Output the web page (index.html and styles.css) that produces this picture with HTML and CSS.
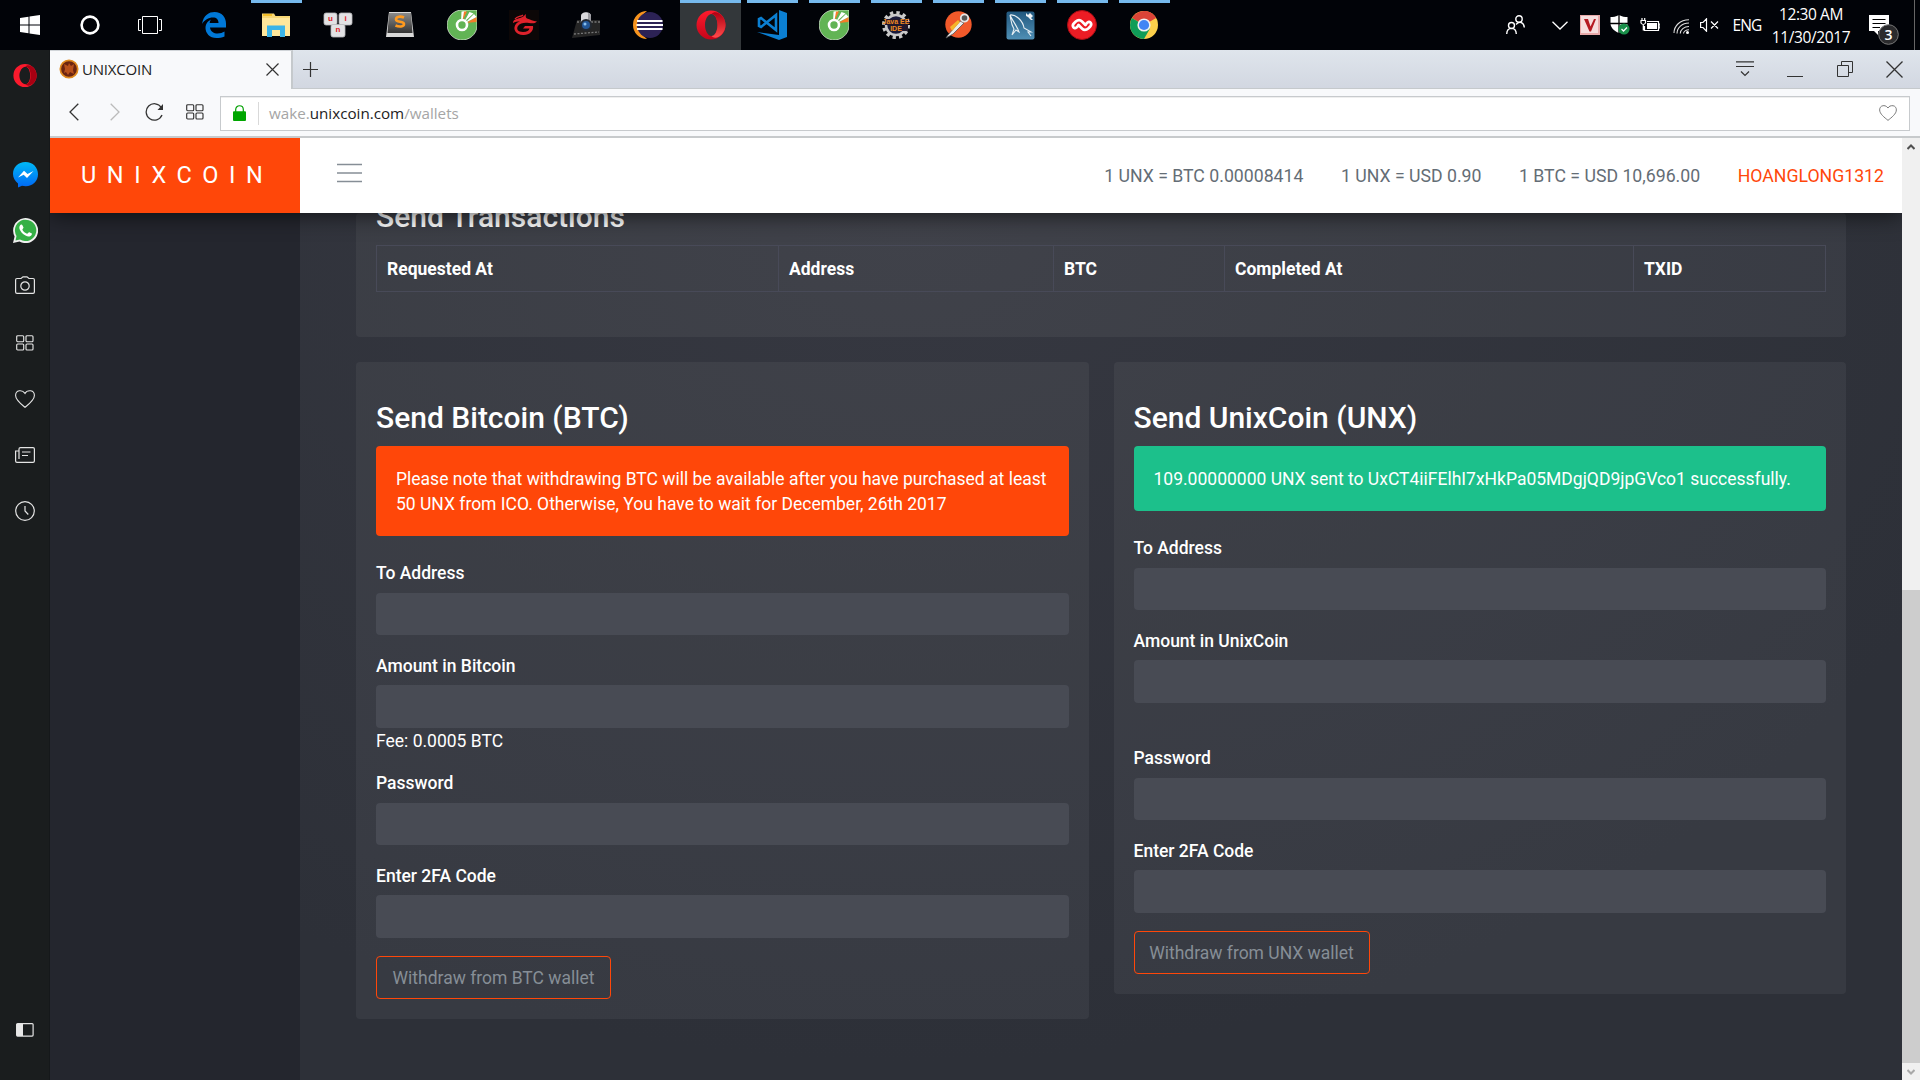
FILE: index.html
```html
<!DOCTYPE html>
<html lang="en">
<head>
<meta charset="utf-8">
<title>UNIXCOIN</title>
<link rel="stylesheet" href="styles.css">
</head>
<body>
<svg class="defs" width="0" height="0">
  <defs>
    <linearGradient id="redRing" x1="0" x2="0" y1="0" y2="1"><stop offset="0" stop-color="#ff1b2d"/><stop offset="1" stop-color="#c4051a"/></linearGradient>
    <linearGradient id="redRight" x1="0" x2="0" y1="0" y2="1"><stop offset="0" stop-color="#b00012"/><stop offset="1" stop-color="#ff4b4b"/></linearGradient>
    <linearGradient id="msg" x1="0" x2="0" y1="0" y2="1"><stop offset="0" stop-color="#00b8f5"/><stop offset="1" stop-color="#0067f5"/></linearGradient>
    <linearGradient id="keycap" x1="0" x2="0" y1="0" y2="1"><stop offset="0" stop-color="#8a8a8a"/><stop offset="1" stop-color="#343434"/></linearGradient>
    <linearGradient id="sea" x1="0" x2="0" y1="0" y2="1"><stop offset="0" stop-color="#21587f"/><stop offset="1" stop-color="#4f8fb5"/></linearGradient>
    <symbol id="coccoc" viewBox="0 0 30 30"><path d="M15 0H30V13A15 15 0 1 1 15 0Z" fill="#62b455" stroke="#e8f2e4" stroke-width=".7"/><path d="M14 13L14.500 1.500L19 1Z" fill="#fff"/><path d="M15.500 11L17 1.500L20 1.500Z" fill="#f57c28"/><path d="M17 12L22.500 2L26.500 3.500Z" fill="#fff"/><path d="M19 13L29.500 7V12Z" fill="#f57c28"/><path d="M18 13L27 4L29.500 7Z" fill="#fff"/><circle cx="15" cy="15" r="5" fill="#62b455" stroke="#fff" stroke-width="2.600"/></symbol>
    <symbol id="speed" viewBox="0 0 18 16"><g fill="none" stroke="currentColor" stroke-width="1.150"><rect x=".7" y=".7" width="7" height="6" rx="1"/><rect x="10" y=".7" width="7" height="6" rx="1"/><rect x=".7" y="9" width="7" height="6" rx="1"/><rect x="10" y="9" width="7" height="6" rx="1"/></g></symbol>
    <symbol id="heart" viewBox="0 0 20 18"><path d="M10 3.400C8 .6 5.500.6 4.300.8C1.500 1.300.6 3.500.6 5.500C.6 10 6 14 10 17.300C14 14 19.400 10 19.400 5.500C19.400 3.500 18.500 1.300 15.700.8C13 .5 11 1.500 10 3.400Z" fill="none" stroke="currentColor" stroke-width="1.100"/></symbol>
  </defs>
</svg>

<div class="taskbar">
  <div class="task task-sys"><svg width="20" height="20" viewBox="0 0 20 20"><path d="M0 3L8.500 1.700V9.500H0ZM9.500 1.500L20 0V9.500H9.500ZM0 10.500H8.500V18.300L0 17ZM9.500 10.500H20V20L9.500 18.500Z" fill="#fff"/></svg></div>
  <div class="task task-sys"><svg width="20" height="20" viewBox="0 0 20 20"><circle cx="10" cy="10" r="8.400" fill="none" stroke="#fff" stroke-width="2.600"/></svg></div>
  <div class="task task-view"><svg width="24" height="18" viewBox="0 0 24 18"><path d="M4.500.5H19.500V17.500H4.500ZM3 3.500H.5V14.500H3M21 3.500H23.500V14.500H21" fill="none" stroke="#fff"/></svg></div>
  <div class="task"><svg width="24" height="26" viewBox="0 0 24 26"><path d="M0 12C1.500 3 7 0 12.500 0C20 0 24 5.500 24 11.500V15.500H8C8.500 19.500 12 21.500 15.500 21.500C18.500 21.500 20.500 20.700 22.500 19.500V24.500C20 25.800 17 26 14.500 26C7.500 26 3.500 21 3.500 16C3.500 12 5.800 9 9 7.500C8 8.800 7.800 10 7.700 11H16.500C16.500 7.500 14.500 5.500 11 5.500C6.500 5.500 2.500 8 0 12Z" fill="#0078d7"/></svg></div>
  <div class="task open"><svg width="28" height="24" viewBox="0 0 28 24"><path d="M0 .5H12L13.500 3H28V23H0Z" fill="#f8d775"/><path d="M0 5H28V23H0Z" fill="#ffe79b"/><path d="M1 1H10V3H1Z" fill="#f3be2b"/><path d="M5 24V12.500H23V24H18V17H10V24Z" fill="#3bb4e8"/></svg></div>
  <div class="task"><svg width="30" height="26" viewBox="0 0 30 26"><g fill="#e2e2e4" stroke="#b9b9bb" stroke-width=".8"><rect x="1" y="1" width="13" height="12" rx="2"/><rect x="16" y="1" width="13" height="12" rx="2"/><rect x="8" y="12.500" width="14" height="12.500" rx="2"/></g><g class="keys" fill="#e0202a" text-anchor="middle"><text x="7.500" y="8.500">u</text><text x="22.500" y="8.500">i</text><text x="15" y="20">n</text></g></svg></div>
  <div class="task"><svg width="28" height="26" viewBox="0 0 28 26"><path d="M3 0H25L28 25H0Z" fill="#d9d9d9"/><path d="M3 1H25L26.500 21H1.500Z" fill="url(#keycap)"/><path d="M18 5.500C15 4 10 4.200 10 7.500C10 10.500 18 9 18 12C18 15 13 15 9.500 13.500" fill="none" stroke="#ff9a1f" stroke-width="2.600"/></svg></div>
  <div class="task"><svg width="30" height="30"><use href="#coccoc"/></svg></div>
  <div class="task"><svg width="30" height="30" viewBox="0 0 30 30"><rect width="30" height="30" fill="#0c0707"/><path d="M4 13C4 9 8 9 11 8C14 7 15 6 17 4C16.500 6 16.500 7.500 18 8.500C21 9.500 24 11 28 11.500C26 13.500 24 13.500 20 13C15 12.500 11 13 9 16C7 19 9 22 14 22C18 22 20 20.500 20.500 18.500H14L16 16H24C25 21 20 25.500 14 25C7 24.500 4 20 6 15.500C7 13 9 12 11 11.500C8 11.500 6 11.500 4 13Z" fill="#e0222b"/><path d="M6 9C8 6 12 7 14 5" fill="none" stroke="#e0222b" stroke-width="1.300"/></svg></div>
  <div class="task"><svg width="28" height="26" viewBox="0 0 28 26"><path d="M5 8H28V23L0 26Z" fill="#252525"/><path d="M2 22L27 20M5 10H28" stroke="#777" stroke-width="1.300" stroke-dasharray="2 1.500"/><path d="M9 4C9-1 19-1 19 4V15H9Z" fill="#d8d8dc"/><path d="M16 1C19 1 19 4 19 6V15H16Z" fill="#9a9aa0"/><circle cx="14" cy="13" r="6" fill="#222831"/><circle cx="14" cy="13" r="4" fill="#235797"/><circle cx="13" cy="12" r="1.500" fill="#8ac0ee"/></svg></div>
  <div class="task"><svg width="30" height="28" viewBox="0 0 30 28"><path d="M14 0A14 14 0 0 0 14 28A17 17 0 0 1 14 0Z" fill="#f7941e"/><circle cx="17" cy="14" r="13" fill="#2c2255"/><path d="M4 10H29.500M3.500 14H30M4 18H29.500" stroke="#fff" stroke-width="2.200"/></svg></div>
  <div class="task open active"><svg width="30" height="30" viewBox="0 0 30 30"><path fill-rule="evenodd" d="M15 .5A14.500 14.500 0 1 0 15 29.500A14.500 14.500 0 1 0 15 .5ZM15.500 4C19 4 21.500 9 21.500 15S19 26 15.500 26S9 21 9 15S12 4 15.500 4Z" fill="url(#redRing)"/><path d="M15.500 4C20 -1 29.500 6 29.500 15S20 31 15.500 26C19 26 21.500 21 21.500 15S19 4 15.500 4Z" fill="url(#redRight)"/></svg></div>
  <div class="task open"><svg width="30" height="30" viewBox="0 0 30 30"><path d="M22 0L30 3V27L22 30L0 22L22 25Z" fill="#0b7fd2"/><path d="M19 5L4 17L2 16V9L4 8L19 20Z" fill="none" stroke="#0b7fd2" stroke-width="2.600"/></svg></div>
  <div class="task open"><svg width="30" height="30"><use href="#coccoc"/></svg></div>
  <div class="task open"><svg width="30" height="30" viewBox="0 0 30 30"><circle cx="15" cy="15" r="12.300" fill="none" stroke="#c9c9c9" stroke-width="3.500" stroke-dasharray="3.300 3.140"/><circle cx="15" cy="15" r="10" fill="#191a3a" stroke="#c9c9c9" stroke-width="2.500"/><path d="M4 9H27V21H9V15H4Z" fill="#20182c"/><g class="ide" fill="#f08a24" text-anchor="middle"><text x="15" y="14">Java EE</text><text x="15" y="20.500">IDE</text></g></svg></div>
  <div class="task open"><svg width="28" height="28" viewBox="0 0 28 28"><circle cx="14.500" cy="13.500" r="13.200" fill="#f1592a"/><path d="M4 24L16 10L20 12L9 23L2 27Z" fill="#ececec" stroke="#555" stroke-width=".8"/><path d="M6 16L14 9L16 11L8 20Z" fill="#f5b52b"/><circle cx="20.500" cy="7" r="3.700" fill="#555" stroke="#e4e4e4" stroke-width="1.800"/></svg></div>
  <div class="task open"><svg width="29" height="29" viewBox="0 0 29 29"><rect x=".5" y=".5" width="28" height="28" rx="2" fill="url(#sea)"/><path d="M4 4C10 3 17 10 18 17L25 21L22 21L25 25M4 4C5 9 5 13 8 18L6 24L10 19L13 21C11 15 6 9 4 4" fill="none" stroke="#e6eef3" stroke-width="1.100"/><path d="M20 2L22 4L24 2L27 5L25 7L27 9L25 9L22 6L20 5Z" fill="#eef3f6"/></svg></div>
  <div class="task open"><svg width="30" height="30" viewBox="0 0 30 30"><circle cx="15" cy="15" r="14.500" fill="#ec1c24" stroke="#a80d14"/><g fill="none" stroke="#fff" stroke-width="2.700" stroke-linecap="round"><path d="M11.500 15.500L9.500 17.500C7 19.500 4.500 16 6.800 13.500L8.500 11.800C11 9.500 13 9.500 15 11.500L18.500 15"/><path d="M18.500 14.500L20.500 12.500C23 10.500 25.500 14 23.200 16.500L21.500 18.200C19 20.500 17 20.500 15 18.500L11.500 15"/></g></svg></div>
  <div class="task open"><svg width="28" height="28" viewBox="0 0 28 28"><circle cx="14" cy="14" r="14" fill="#fcd04b"/><path d="M14 14L1.900 7A14 14 0 0 1 26.100 7Z" fill="#db4437"/><path d="M14 7H26.100A14 14 0 0 0 14 0Z" fill="#db4437"/><path d="M1.900 7A14 14 0 0 0 14 28L20 17.500L14 14Z" fill="#0f9d58"/><circle cx="14" cy="14" r="6.600" fill="#f1f1f1"/><circle cx="14" cy="14" r="5.100" fill="#4285f4"/></svg></div>

  <div class="tray">
    <div class="tray-item people"><svg width="19" height="20" viewBox="0 0 19 20"><g fill="none" stroke="#fff" stroke-width="1.400"><circle cx="5.500" cy="10.500" r="3"/><path d="M.7 19C1 11.500 10 11.500 10.300 19"/><circle cx="13" cy="4" r="3.200"/><path d="M10 9.500C13.500 5.500 18 7.500 18.300 12.500"/></g></svg></div>
    <div class="tray-item chev"><svg width="16" height="9" viewBox="0 0 16 9"><path d="M.5.7L8 8L15.500.7" fill="none" stroke="#fff" stroke-width="1.300"/></svg></div>
    <div class="tray-item"><svg width="20" height="20" viewBox="0 0 20 20"><rect width="20" height="20" fill="#e8a9a9"/><rect x="1" y="1" width="17" height="17" fill="#f7dede"/><path d="M4 4H8L10.500 11.500L14 4H16L11 16.500H9.500Z" fill="#b51a22"/></svg></div>
    <div class="tray-item"><svg width="20" height="20" viewBox="0 0 20 20"><path d="M9 0C6 1.800 3 2 .5 2V9C1 13 4 16 9 18C14 16 17 13 17.500 9V2C15 2 12 1.800 9 0Z" fill="#fff"/><path d="M9 0V18M0 8.500H18" stroke="#000" stroke-width="1.300"/><circle cx="14" cy="14" r="5.600" fill="#1a8f4a"/><path d="M11.500 14L13.500 16L17 12.500" fill="none" stroke="#fff" stroke-width="1.300"/></svg></div>
    <div class="tray-item battery"><svg width="20" height="14" viewBox="0 0 20 14"><path d="M7 3.500H18.500V12.500H4.500V8M18.500 6H20V10H18.500M1 2V5Q3.300 8 5.500 5V2M.5 2.500H6M2 0V2M4.700 0V2M3.300 6.500V12.500" fill="none" stroke="#fff" stroke-width="1.200"/><path d="M7 5H17V11H7Z" fill="#fff"/></svg></div>
    <div class="tray-item wifi"><svg width="17" height="15" viewBox="0 0 17 15"><g fill="none" stroke="#ddd" stroke-width="1.100"><path d="M1 14C1 7 7 .7 16 .7"/><path d="M4 14.500C4 9 9 4 16 4"/><path d="M7.300 14.500C7.300 11 11 7.500 16 7.500"/><path d="M10.500 14.500C10.500 12.500 13 10.800 16 10.800"/></g><circle cx="14.500" cy="13.500" r="1.500" fill="#fff"/></svg></div>
    <div class="tray-item vol"><svg width="19" height="14" viewBox="0 0 19 14"><path d="M.6 4.500H3L6.500.8V13.200L3 9.500H.6ZM11 3.500L18 10.500M18 3.500L11 10.500" fill="none" stroke="#fff" stroke-width="1.200"/></svg></div>
    <div class="lang">ENG</div>
    <div class="clock"><span class="time">12:30 AM</span><span class="date">11/30/2017</span></div>
    <div class="notif"><svg width="31" height="31" viewBox="0 0 31 31"><path d="M0 0H20V16H9V20L5 16H0Z" fill="#fff"/><path d="M3.500 4.500H16.500M3.500 8.500H16.500M3.500 12.500H11" stroke="#000" stroke-width="1.200"/><circle cx="19.500" cy="19.500" r="9.800" fill="#2b2b2d" stroke="#777"/><text class="notif-count" x="19.500" y="24.500" text-anchor="middle" fill="#fff">3</text></svg></div>
    <div class="desktop-edge"></div>
  </div>
</div>

<div class="workspace">
  <div class="opera-side">
    <svg class="side-logo" width="24" height="25" viewBox="0 0 30 30"><path fill-rule="evenodd" d="M15 .5A14.500 14.500 0 1 0 15 29.500A14.500 14.500 0 1 0 15 .5ZM15.500 4C19 4 21.500 9 21.500 15S19 26 15.500 26S8 21 8 15S12 4 15.500 4Z" fill="#fb1a2d"/><path d="M15.500 4C20 -1 29.500 6 29.500 15S20 31 15.500 26C20 26 22 21 22 15S20 4 15.500 4Z" fill="#a80012"/></svg>
    <svg class="side-msg" width="25" height="26" viewBox="0 0 25 26"><path d="M12.500 0C5 0 0 5.300 0 12C0 16 2 19 5 21.500V25.500L9 23.800C18 26 25 20 25 12.300C25 5.500 20 0 12.500 0Z" fill="url(#msg)"/><path d="M5 15.500L11 8.800L14.500 12L20.500 9L14 16L10.700 12.700Z" fill="#fff"/></svg>
    <svg class="side-wa" width="25" height="25" viewBox="0 0 25 25"><path d="M0 25L1.600 18.500A12.500 12.500 0 1 1 6.500 23.500Z" fill="#f0f0f0"/><path d="M2.500 22.500L3.500 18A10.700 10.700 0 1 1 7 21.500Z" fill="#35b046"/><path d="M8 6.500C9 6 9.500 7 10.500 9.500C10.700 10.300 9 11 9.500 12C10.500 13.800 12 15 14 15.700C15 15.800 15.300 14 16.500 14.300C18.500 15.300 19.300 15.500 18.800 16.500C17.500 19 15 19 12.500 17.500C9.500 16 7.500 13.500 6.500 11C6 9 6.700 7.300 8 6.500Z" fill="#fff"/></svg>
    <svg class="side-cam" width="20" height="18" viewBox="0 0 20 18"><g fill="none" stroke="#e4e4e4" stroke-width="1.200"><path d="M2 2.500H6L8 .8H12L14 2.500H18Q19.400 2.500 19.400 4V16Q19.400 17.400 18 17.400H2Q.6 17.400.6 16V4Q.6 2.500 2 2.500Z"/><circle cx="10" cy="10" r="4.200"/></g></svg>
    <svg class="side-speed" width="18" height="16"><use href="#speed"/></svg>
    <svg class="side-heart" width="20" height="18"><use href="#heart"/></svg>
    <svg class="side-news" width="20" height="16" viewBox="0 0 20 16"><path d="M4 12V2Q4 .7 5.500.7H18Q19.400.7 19.400 2V14Q19.400 15.400 18 15.400H2Q.6 15.400.6 14V4H4M7 5H15.500M7 8.500H13" fill="none" stroke="#e4e4e4" stroke-width="1.200"/></svg>
    <svg class="side-clock" width="20" height="20" viewBox="0 0 20 20"><circle cx="10" cy="10" r="9.300" fill="none" stroke="#e4e4e4" stroke-width="1.200"/><path d="M10 5V10L13.300 13.500" fill="none" stroke="#e4e4e4" stroke-width="1.200"/></svg>
    <svg class="side-panel" width="18" height="14" viewBox="0 0 18 14"><rect x=".6" y=".6" width="16.500" height="12.500" rx="1" fill="none" stroke="#e4e4e4" stroke-width="1.200"/><path d="M1 1H7V13H1Z" fill="#e8e8e8"/></svg>
  </div>

  <div class="browser">
    <div class="tabs">
      <div class="tab">
        <svg width="20" height="20" viewBox="0 0 20 20"><circle cx="10" cy="10" r="8.700" fill="#6b2410" stroke="#e08a1e" stroke-width="1.700"/><path d="M5 5L9 7L10 4L12 7L15 5L14 11L15 15L11 13L9 16L7 13L5 14L6 10Z" fill="#b8501a"/></svg>
        <span class="tab-title">UNIXCOIN</span>
        <svg class="tab-close" width="13" height="13" viewBox="0 0 13 13"><path d="M.5.5L12.500 12.500M12.500.5L.5 12.500" stroke="#333" stroke-width="1.200"/></svg>
      </div>
      <svg class="new-tab" width="15" height="15" viewBox="0 0 15 15"><path d="M7.500 0V15M0 7.500H15" stroke="#333" stroke-width="1.200"/></svg>
      <div class="win-controls">
        <svg width="18" height="16" viewBox="0 0 18 16"><path d="M0 .8H18M0 5.500H18M5 10.500L9 14.500L13 10.500" fill="none" stroke="#333" stroke-width="1.200"/></svg>
        <svg width="16" height="16" viewBox="0 0 16 16"><path d="M0 15.500H16" stroke="#333"/></svg>
        <svg width="16" height="16" viewBox="0 0 16 16"><path d="M.5 4.500H11.500V15.500H.5ZM4.500 4.500V.5H15.500V11.500H11.500" fill="none" stroke="#333"/></svg>
        <svg width="17" height="17" viewBox="0 0 17 17"><path d="M.5.5L16.500 16.500M16.500.5L.5 16.500" stroke="#333" stroke-width="1.300"/></svg>
      </div>
    </div>
    <div class="toolbar">
      <svg class="nav-back" width="10" height="18" viewBox="0 0 10 18"><path d="M9.300.7L1 9L9.300 17.300" fill="none" stroke="#333" stroke-width="1.300"/></svg>
      <svg class="nav-fwd" width="10" height="18" viewBox="0 0 10 18"><path d="M.7.700L9 9L.7 17.300" fill="none" stroke="#bbb" stroke-width="1.300"/></svg>
      <svg class="nav-reload" width="19" height="18" viewBox="0 0 19 18"><path d="M16.300 4.500A8.200 8.200 0 1 0 17 12" fill="none" stroke="#333" stroke-width="1.300"/><path d="M18 1V7H12.500Z" fill="#333"/></svg>
      <svg class="nav-speed" width="18" height="16"><use href="#speed"/></svg>
      <div class="address">
        <svg width="13" height="16" viewBox="0 0 13 16"><path d="M2.700 7V4.500C2.700-.5 10.300-.5 10.300 4.500V7" fill="none" stroke="#00a000" stroke-width="1.200"/><rect y="6.300" width="13" height="9.700" rx="1" fill="#00a600"/></svg>
        <span class="divider"></span>
        <span class="url">wake.<b>unixcoin.com</b>/wallets</span>
        <svg class="fav" width="18" height="16" viewBox="0 0 20 18"><use href="#heart"/></svg>
      </div>
    </div>

    <div class="viewport">
      <div class="page">
        <header class="header">
          <div class="brand">UNIXCOIN</div>
          <svg class="burger" width="25" height="20" viewBox="0 0 25 20"><path d="M0 1.500H25M0 10H25M0 18.500H25" stroke="#868e96" stroke-width="1.500"/></svg>
          <nav class="rates">
            <span>1 UNX = BTC 0.00008414</span>
            <span>1 UNX = USD 0.90</span>
            <span>1 BTC = USD 10,696.00</span>
            <span class="user">HOANGLONG1312</span>
          </nav>
        </header>
        <div class="body">
          <aside class="menu"></aside>
          <main class="content">
            <section class="card transactions">
              <h2>Send Transactions</h2>
              <table>
                <colgroup><col class="c1"><col class="c2"><col class="c3"><col class="c4"><col class="c5"></colgroup>
                <tr><th>Requested At</th><th>Address</th><th>BTC</th><th>Completed At</th><th>TXID</th></tr>
              </table>
            </section>
            <div class="columns">
              <section class="card form-card">
                <h2>Send Bitcoin (BTC)</h2>
                <div class="alert warn">Please note that withdrawing BTC will be available after you have purchased at least<br>50 UNX from ICO. Otherwise, You have to wait for December, 26th 2017</div>
                <div class="field"><label>To Address</label><div class="input"></div></div>
                <div class="field"><label>Amount in Bitcoin</label><div class="input"></div><div class="fee">Fee: 0.0005 BTC</div></div>
                <div class="field"><label>Password</label><div class="input"></div></div>
                <div class="field"><label>Enter 2FA Code</label><div class="input"></div></div>
                <button class="btn">Withdraw from BTC wallet</button>
              </section>
              <section class="card form-card">
                <h2>Send UnixCoin (UNX)</h2>
                <div class="alert success">109.00000000 UNX sent to UxCT4iiFElhI7xHkPa05MDgjQD9jpGVco1 successfully.</div>
                <div class="field"><label>To Address</label><div class="input"></div></div>
                <div class="field"><label>Amount in UnixCoin</label><div class="input"></div><div class="fee"></div></div>
                <div class="field"><label>Password</label><div class="input"></div></div>
                <div class="field"><label>Enter 2FA Code</label><div class="input"></div></div>
                <button class="btn btn-unx">Withdraw from UNX wallet</button>
              </section>
            </div>
          </main>
        </div>
      </div>
      <div class="scrollbar">
        <svg width="8" height="6" viewBox="0 0 8 6"><path d="M.5 5L4 1.500L7.500 5" fill="none" stroke="#505050" stroke-width="2"/></svg>
        <div class="thumb"></div>
        <svg width="8" height="6" viewBox="0 0 8 6"><path d="M.5 1L4 4.500L7.500 1" fill="none" stroke="#a8a8a8" stroke-width="2"/></svg>
      </div>
    </div>
  </div>
</div>
</body>
</html>
```
FILE: styles.css
```css
* { box-sizing: border-box; }
body { margin: 0; width: 1920px; height: 1080px; overflow: hidden; display: flex; flex-direction: column; background: #000; font-family: Roboto, sans-serif; font-size: 17.5px; line-height: 25px; color: #fff; }
svg { display: block; flex: none; }
.defs { position: absolute; }

/* taskbar */
.taskbar { height: 50px; flex: none; display: flex; background: #010308; font-family: "Open Sans", sans-serif; }
.task { width: 62px; display: flex; align-items: center; justify-content: center; }
.task-sys { width: 60px; }
.task-view { width: 63px; padding-right: 3px; }
.open { background: linear-gradient(#76b9ed, #76b9ed) 6px 0 / 51px 3px no-repeat; }
.active { width: 61px; margin-left: 1px; background: linear-gradient(#76b9ed, #76b9ed) 0 0 / 100% 3px no-repeat, #33373a; }
.keys { font: bold 8px "Liberation Sans", sans-serif; }
.ide { font: bold 7px "Liberation Sans", sans-serif; }
.tray { margin-left: auto; display: flex; align-items: center; }
.tray-item { width: 30px; display: flex; justify-content: center; }
.chev { width: 60px; padding-left: 30px; }
.people { margin-right: -15px; }
.wifi { width: 32px; padding-top: 3px; }
.vol { width: 25px; }
.lang { width: 48px; padding-left: 2px; text-align: center; font-size: 15.500px; letter-spacing: -.8px; }
.clock { width: 82px; padding-top: 1px; display: flex; flex-direction: column; text-align: center; font-size: 15.500px; line-height: 23px; letter-spacing: -.4px; white-space: nowrap; }
.notif { width: 62px; padding: 10px 0 0 17px; }
.notif-count { font: 600 14px "Open Sans", sans-serif; }
.desktop-edge { width: 6px; height: 50px; border-left: 1px solid #666; }

/* side rail */
.workspace { flex: 1; display: flex; min-height: 0; }
.opera-side { width: 50px; background: #1a1d1e; border-right: 1px solid #15181a; padding: 13px 0 0; display: flex; flex-direction: column; align-items: center; color: #e4e4e4; }
.side-logo, .side-msg, .side-wa { margin-left: 1px; }
.side-msg { margin-top: 74px; }
.side-wa { margin-top: 30px; }
.side-cam { margin-top: 33px; }
.side-speed { margin-top: 41px; }
.side-heart { margin-top: 39px; }
.side-news { margin-top: 39px; }
.side-clock { margin-top: 38px; }
.side-panel { margin-top: 502px; }

/* browser chrome */
.browser { flex: 1; display: flex; flex-direction: column; color: #333; }
.tabs { height: 39px; flex: none; display: flex; align-items: center; background: linear-gradient(#dfe5ec, #d2d7e1); border-bottom: 1px solid #c5c9cc; }
.tab { width: 243px; height: 39px; display: flex; align-items: center; padding: 0 0 2px 9px; background: #f8f9fb; border-right: 2px solid #c5c9cc; border-top: 1px solid #d0d4d8; margin-bottom: -1px; }
.tab-title { margin-left: 3px; font: 15px "Open Sans", sans-serif; letter-spacing: -.2px; color: #222; }
.tab-close { margin-left: auto; margin-right: 12px; }
.new-tab { margin-left: 10px; }
.win-controls { margin-left: auto; display: flex; gap: 33.500px; padding-right: 17px; align-items: center; }
.toolbar { height: 49px; flex: none; display: flex; align-items: center; background: #f8f9fb; border-bottom: 2px solid #c7cacc; padding: 0 10px 2px 19px; }
.nav-fwd { margin-left: 31px; }
.nav-reload { margin-left: 25px; }
.nav-speed { margin-left: 22px; }
.address { flex: 1; height: 35px; margin: 3px 0 0 16px; display: flex; align-items: center; background: #fff; border: 1px solid #c7cacd; box-shadow: inset 0 1px #eee; padding: 0 12px 0 12px; }
.divider { width: 1px; height: 23px; background: #d9d9d9; margin: 0 10px 0 12px; }
.url { font: 15.200px "Open Sans", sans-serif; color: #a5a5a5; }
.url b { font-weight: 400; color: #222; }
.fav { margin-left: auto; color: #777; }

/* site */
.viewport { flex: 1; min-height: 0; display: flex; color: #fff; }
.page { width: 1852px; display: flex; flex-direction: column; }
.header { height: 75px; flex: none; display: flex; align-items: center; background: #fff; box-shadow: 0 0 25px rgba(0,0,0,.75); position: relative; clip-path: inset(0 0 -40px 0); z-index: 1; }
.brand { width: 250px; height: 75px; background: #ff4709; padding-left: 31px; font-size: 23.500px; line-height: 75px; letter-spacing: 10.600px; }
.burger { margin: -6px 0 0 37px; }
.rates { margin-left: auto; padding: 2px 18px 0 0; display: flex; gap: 37.500px; font-size: 17.700px; color: #646d75; }
.rates .user { color: #ff4709; }
.body { flex: 1; min-height: 0; display: flex; }
.menu { width: 250px; background: #24262e; }
.content { flex: 1; padding: 0 56px; background: radial-gradient(ellipse 1150px 850px at 38% 0, #363841 0, #2d3038 100%); }
.card { background: rgba(255,255,255,.05); border-radius: 4px; padding: 0 20px; }
.transactions { height: 124px; display: flow-root; }
h2 { margin: 0; font-size: 30px; line-height: 36px; font-weight: 500; }
.transactions h2 { margin-top: -14px; padding-bottom: 10px; }
table { width: 1449px; table-layout: fixed; border-collapse: collapse; }
th { height: 46px; border: 1px solid #484a58; text-align: left; padding: 2px 10px 0; font-weight: 700; }
.c1 { width: 402px; } .c2 { width: 275px; } .c3 { width: 171px; } .c4 { width: 409px; } .c5 { width: 192px; }
.columns { margin-top: 25px; display: flex; gap: 25px; align-items: flex-start; }
.form-card { flex: 1; padding: 38px 20px 20px; }
.alert { margin-top: 10px; padding: 21px 20px 19px; border-radius: 4px; margin-bottom: 25.200px; white-space: nowrap; }
.warn { background: #ff4709; }
.success { background: #1cc08b; }
.field { margin-bottom: 18.500px; }
.field label { display: block; font-weight: 500; margin-bottom: 6.500px; }
.input { height: 42.500px; border-radius: 4px; background: #484b54; }
.fee { height: 25px; padding-top: 1px; }
.btn { display: block; height: 43px; width: 235px; padding: 1px 0 0; background: transparent; border: 1px solid #ff4709; border-radius: 4px; font: 17.500px Roboto, sans-serif; color: #868e96; }
.btn-unx { width: 236px; }

/* scrollbar */
.scrollbar { width: 18px; background: #f0f0f0; display: flex; flex-direction: column; align-items: center; padding: 6px 0 5px; }
.thumb { width: 18px; height: 473px; margin: auto 0 6px; background: #cdcdcd; }
```
